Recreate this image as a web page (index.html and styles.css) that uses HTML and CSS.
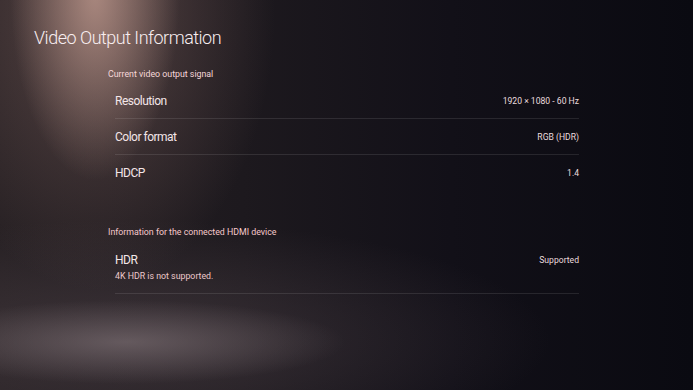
FILE: index.html
```html
<!DOCTYPE html>
<html lang="en">
<head>
    <meta charset="UTF-8">
    <meta name="viewport" content="width=device-width, initial-scale=1.0">
    <title>Video Output Information</title>
    <link rel="stylesheet" href="styles.css">
</head>
<body>
    <div class="screen">
        <h1 class="title">Video Output Information</h1>

        <div class="section">
            <div class="section-head">Current video output signal</div>
            <div class="row">
                <span class="label">Resolution</span>
                <span class="value">1920 × 1080 - 60 Hz</span>
            </div>
            <div class="row">
                <span class="label">Color format</span>
                <span class="value">RGB (HDR)</span>
            </div>
            <div class="row last">
                <span class="label">HDCP</span>
                <span class="value">1.4</span>
            </div>
        </div>

        <div class="section second">
            <div class="section-head">Information for the connected HDMI device</div>
            <div class="row tall">
                <div class="label-group">
                    <span class="label">HDR</span>
                    <span class="note">4K HDR is not supported.</span>
                </div>
                <span class="value">Supported</span>
            </div>
        </div>
    </div>
</body>
</html>
```

FILE: styles.css
```css
html, body {
    margin: 0;
    height: 100%;
}
body {
    font-family: 'Roboto', 'Open Sans', sans-serif;
    color: #f3e6e8;
    background:
        radial-gradient(ellipse 85px 190px at 95px -10px, rgba(205, 165, 152, 0.7), rgba(205, 165, 152, 0) 100%),
        radial-gradient(ellipse 180px 280px at 95px 10px, rgba(130, 100, 96, 0.55), rgba(130, 100, 96, 0) 100%),
        radial-gradient(ellipse 220px 42px at 125px 342px, rgba(135, 122, 126, 0.55), rgba(135, 122, 126, 0) 100%),
        radial-gradient(ellipse 420px 120px at 130px 340px, rgba(85, 72, 78, 0.5), rgba(85, 72, 78, 0) 100%),
        linear-gradient(90deg, #262023 0%, #1d191e 35%, #121018 65%, #0a0a11 100%);
    overflow: hidden;
}
.screen {
    padding: 26px 0 0 34px;
}
.title {
    margin: 0;
    font-size: 18px;
    font-weight: 300;
    line-height: 24px;
    letter-spacing: -0.5px;
    color: #f8eef0;
}
.section {
    margin: 15px 0 0 74px;
    width: 471px;
}
.section.second {
    margin-top: 32px;
}
.section-head {
    font-size: 8.8px;
    line-height: 18px;
    color: #f6d8da;
}
.second .section-head {
    color: #f7c9cc;
}
.row {
    display: flex;
    justify-content: space-between;
    align-items: center;
    height: 36px;
    margin-left: 7px;
    border-bottom: 1px solid rgba(255, 255, 255, 0.1);
    box-sizing: border-box;
}
.row.last {
    border-bottom: none;
}
.row.tall {
    height: 53px;
    align-items: flex-start;
    padding-top: 11px;
}
.label {
    font-size: 12px;
    line-height: 16px;
    letter-spacing: -0.5px;
}
.label-group {
    display: flex;
    flex-direction: column;
}
.note {
    font-size: 8.8px;
    line-height: 16px;
    color: #ecc9cb;
}
.value {
    font-size: 8.6px;
    line-height: 16px;
    color: #eadcde;
}
```
